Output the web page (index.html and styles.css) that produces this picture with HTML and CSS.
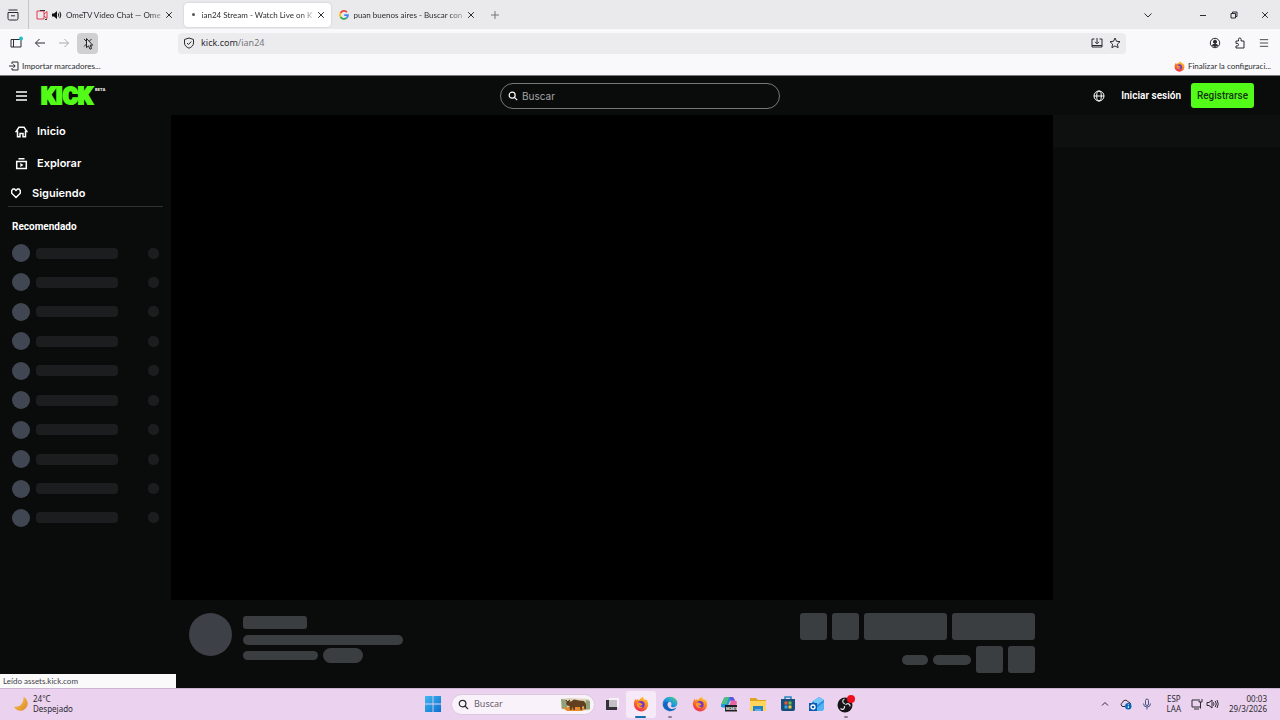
FILE: index.html
```html
<!DOCTYPE html>
<html lang="es">
<head>
<meta charset="utf-8">
<title>ian24 Stream - Watch Live on Kick</title>
<link rel="stylesheet" href="styles.css">
</head>
<body>
<svg class="defs" aria-hidden="true">
  <defs>
    <linearGradient id="ff" x1="0.8" y1="0" x2="0.3" y2="1"><stop offset="0" stop-color="#ffd43a"/><stop offset="0.45" stop-color="#ff8a1f"/><stop offset="1" stop-color="#ee2355"/></linearGradient>
    <linearGradient id="win" x1="0" y1="0" x2="1" y2="1"><stop offset="0" stop-color="#42b9ee"/><stop offset="1" stop-color="#0a6fd0"/></linearGradient>
    <linearGradient id="moon" x1="0" y1="0" x2="1" y2="1"><stop offset="0" stop-color="#f6c75c"/><stop offset="1" stop-color="#dd8a1e"/></linearGradient>
    <linearGradient id="edge" x1="0" y1="1" x2="1" y2="0"><stop offset="0" stop-color="#0b58ae"/><stop offset="0.5" stop-color="#1d9ce0"/><stop offset="1" stop-color="#5ad66b"/></linearGradient>
    <symbol id="firefox" viewBox="0 0 16 16"><path d="M8 15.500A7.200 7.200 0 0 1 .9 8.300C.8 6 1.800 4 2.800 2.600l.4 1.800L5 3l.8 1.500C7.200 2.400 8.500 1.200 10 .4c0 1.600 1 2.300 2.200 3.500l.8-.6c1.300 1.400 2.200 3.100 2.200 5A7.200 7.200 0 0 1 8 15.500z" fill="url(#ff)"/><circle cx="8" cy="8.600" r="3.700" fill="#7438c5"/><path d="M4.200 7c1.800-1 3.200-.4 4 .6 1.100.1 1.400.9.900 1.500-1 .9-2.100.7-3 .5.800 1.400 2.700 1.800 4 1.100-1.500 2-4.900 1.800-6-.8-.3-1-.3-2 .1-2.900z" fill="#ff9a26"/></symbol>
    <symbol id="x" viewBox="0 0 8 8"><path d="M1.200 1.200l5.600 5.600M6.800 1.200L1.200 6.800" fill="none" stroke="currentColor"/></symbol>
    <symbol id="lens" viewBox="0 0 12 12"><circle cx="5" cy="5" r="3.600" fill="none" stroke="currentColor" stroke-width="1.400"/><path d="M7.700 7.700L11 11" stroke="currentColor" stroke-width="1.400"/></symbol>
    <symbol id="menu" viewBox="0 0 12 12"><path d="M1 2h10M1 6h10M1 10h10" stroke="currentColor" fill="none"/></symbol>
  </defs>
</svg>

<header class="browser">
  <div class="tabs">
    <button class="tab-list" aria-label="Pestañas recientes"><svg width="12" height="12" viewBox="0 0 12 12"><path d="M1.500 1h9M1 3.500h10v6a1.500 1.500 0 0 1-1.500 1.500h-7A1.500 1.500 0 0 1 1 9.500zM4 6.800h4"/></svg></button>
    <div class="tab audible">
      <svg width="12" height="12" viewBox="0 0 12 12"><path d="M1 2h7v8H1zM8 5l3-2.500v7L8 7" stroke="#df3b50"/><path d="M4 1.500h5M9 10.500h2" stroke="#333"/></svg>
      <svg width="10" height="10" viewBox="0 0 10 10"><path d="M0 3.500h2L5 1v8L2 6.500H0z" fill="#111"/><path d="M6.300 3.300q1 1.700 0 3.400M7.800 1.800q2 3.200 0 6.400" stroke="#111"/></svg>
      <span class="tab-title">OmeTV Video Chat — Ome</span>
      <button class="close" aria-label="Cerrar pestaña"><svg width="8" height="8"><use href="#x"/></svg></button>
    </div>
    <div class="tab active">
      <span class="loading"></span>
      <span class="tab-title">ian24 Stream - Watch Live on K</span>
      <button class="close" aria-label="Cerrar pestaña"><svg width="8" height="8"><use href="#x"/></svg></button>
    </div>
    <div class="tab">
      <svg width="10" height="10" viewBox="0 0 10 10"><g stroke-width="1.700"><path d="M8 2.200A3.900 3.900 0 0 0 1.600 3" stroke="#ea4335"/><path d="M1.600 3a4 4 0 0 0 0 4" stroke="#fbbc05"/><path d="M1.600 7A3.900 3.900 0 0 0 7.500 8" stroke="#34a853"/><path d="M7.500 8A4 4 0 0 0 9 5.100H5.200" stroke="#4285f4"/></g></svg>
      <span class="tab-title">puan buenos aires - Buscar con</span>
      <button class="close" aria-label="Cerrar pestaña"><svg width="8" height="8"><use href="#x"/></svg></button>
    </div>
    <button class="new-tab" aria-label="Nueva pestaña"><svg width="10" height="10" viewBox="0 0 10 10"><path d="M5 1v8M1 5h8"/></svg></button>
    <div class="window-controls">
      <button class="all-tabs" aria-label="Lista de pestañas"><svg width="10" height="10" viewBox="0 0 10 10"><path d="M1.500 3.500L5 7l3.500-3.500"/></svg></button>
      <button aria-label="Minimizar"><svg width="8" height="8" viewBox="0 0 8 8"><path d="M1 4.500h6"/></svg></button>
      <button aria-label="Restaurar"><svg width="8" height="8" viewBox="0 0 8 8"><path d="M1 2.500h4.500V7H1zM2.500 2.500V1H7v4.500H5.500"/></svg></button>
      <button aria-label="Cerrar"><svg width="8" height="8"><use href="#x"/></svg></button>
    </div>
  </div>

  <div class="toolbar">
    <nav class="nav-buttons" aria-label="Navegación">
      <button aria-label="Barra lateral"><svg width="14" height="14" viewBox="0 0 14 14"><path d="M2 3.500h10v7.500H2zM4.500 3.500V11"/><circle cx="12" cy="2.500" r="2" fill="#20bfc9"/></svg></button>
      <button aria-label="Atrás"><svg width="12" height="12" viewBox="0 0 12 12"><path d="M11 6H1.500M5.500 2l-4 4 4 4"/></svg></button>
      <button class="dim" aria-label="Adelante"><svg width="12" height="12" viewBox="0 0 12 12"><path d="M1 6h9.500M6.500 2l4 4-4 4"/></svg></button>
      <button class="stop" aria-label="Detener"><svg width="16" height="16" viewBox="0 0 16 16"><path d="M4 4l7.500 7.500M11.500 4L4 11.500"/><path d="M6.500 3.500v9.200l2-1.900 1.500 3.400 1.600-.7-1.500-3.300h2.600z" fill="#ddd" stroke="#222"/></svg></button>
    </nav>
    <form class="url-bar">
      <svg width="12" height="12" viewBox="0 0 12 12"><path d="M6 1l4.500 1.500V6c0 2.500-2 4.200-4.500 5.200C3.500 10.200 1.500 8.500 1.500 6V2.500zM4 6l1.500 1.500L8.300 4.500"/></svg>
      <span class="url">kick.com<span>/ian24</span></span>
      <button type="button" aria-label="Instalar"><svg width="12" height="12" viewBox="0 0 12 12"><path d="M3.500 2H1v8h10V2H8.500M1 8.500h10M6 1v5.500M4 4.800l2 2 2-2"/></svg></button>
      <button type="button" aria-label="Añadir a marcadores"><svg width="12" height="12" viewBox="0 0 12 12"><path d="M6 1l1.500 3.300 3.500.4-2.600 2.400.7 3.600L6 8.900l-3.100 1.800.7-3.600L1 4.700l3.500-.4z"/></svg></button>
    </form>
    <div class="tools">
      <button aria-label="Cuenta"><svg width="12" height="12" viewBox="0 0 12 12"><circle cx="6" cy="6" r="4.700"/><circle cx="6" cy="4.800" r="1.600" fill="currentColor"/><path d="M3 8.800Q3 6.800 6 6.800T9 8.800L6 10z" fill="currentColor" stroke="none"/></svg></button>
      <button aria-label="Extensiones"><svg width="12" height="12" viewBox="0 0 12 12"><path d="M2 4h2.500V2.300a1.300 1.300 0 0 1 2.600 0V4H10v7H2V9h1.200a1.300 1.300 0 0 0 0-2.600H2z"/></svg></button>
      <button aria-label="Menú"><svg width="10" height="10"><use href="#menu"/></svg></button>
    </div>
  </div>

  <div class="bookmarks">
    <button><svg width="10" height="10" viewBox="0 0 10 10"><path d="M3 3V1h6v8H3V7M0 5h6M4.300 3.200L6.200 5 4.300 6.800"/></svg>Importar marcadores...</button>
    <button><svg width="11" height="11"><use href="#firefox"/></svg>Finalizar la configuraci...</button>
  </div>
</header>

<div class="site">
  <header class="site-header">
    <div class="brand">
      <button aria-label="Menú"><svg width="13" height="12" viewBox="0 0 13 12"><path d="M1 2h11M1 6h11M1 10h11" stroke-width="1.600"/></svg></button>
      <a href="#" aria-label="Kick Beta"><svg class="logo" width="70" height="32" viewBox="0 0 70 32"><text class="logo-name" x="2" y="24">KICK</text><text class="logo-beta" x="56" y="11">BETA</text></svg></a>
    </div>
    <label class="search"><svg width="10" height="10"><use href="#lens"/></svg><input type="search" placeholder="Buscar" aria-label="Buscar"></label>
    <div class="account">
      <button class="globe" aria-label="Idioma"><svg width="12" height="12" viewBox="0 0 12 12"><circle cx="6" cy="6" r="5"/><ellipse cx="6" cy="6" rx="2.300" ry="5"/><path d="M1 6h10"/></svg></button>
      <button class="login">Iniciar sesión</button>
      <button class="signup">Registrarse</button>
    </div>
  </header>

  <aside class="sidebar">
    <nav class="links">
      <a href="#"><svg width="13" height="13" viewBox="0 0 13 13"><path d="M1.200 6.500L4 2.200h5l2.800 4.300H10.500v5.300h-2.500V8.500H5v3.300H2.500V6.500z" stroke-width="1.500"/></svg>Inicio</a>
      <a href="#"><svg width="13" height="13" viewBox="0 0 13 13"><path d="M1.700 4.500h9.600v7H1.700zM3.500 1.700h6" stroke-width="1.500"/><path d="M5.300 6l3.200 2-3.200 2z" fill="currentColor" stroke="none"/></svg>Explorar</a>
      <a class="following" href="#"><svg width="12" height="12" viewBox="0 0 12 12"><path d="M6 10.500L1.700 6.300V3.500L3 2h1.500L6 3.500 7.500 2H9l1.300 1.500v2.800z" stroke-width="1.400"/></svg>Siguiendo</a>
    </nav>
    <h2>Recomendado</h2>
    <ul class="channels">
      <li><i></i><b></b><s></s></li><li><i></i><b></b><s></s></li><li><i></i><b></b><s></s></li><li><i></i><b></b><s></s></li><li><i></i><b></b><s></s></li>
      <li><i></i><b></b><s></s></li><li><i></i><b></b><s></s></li><li><i></i><b></b><s></s></li><li><i></i><b></b><s></s></li><li><i></i><b></b><s></s></li>
    </ul>
  </aside>

  <main class="stream">
    <div class="video"></div>
    <div class="details">
      <div class="bone avatar"></div>
      <div class="info">
        <div class="bone name"></div>
        <div class="bone title"></div>
        <div class="meta"><div class="bone category"></div><div class="bone tag"></div></div>
      </div>
      <div class="actions">
        <div class="row"><div class="bone square"></div><div class="bone square"></div><div class="bone wide"></div><div class="bone wide"></div></div>
        <div class="row"><div class="bone viewers"></div><div class="bone uptime"></div><div class="bone square"></div><div class="bone square"></div></div>
      </div>
    </div>
  </main>

  <aside class="chat"><div class="chat-header"></div></aside>
  <div class="status">Leído assets.kick.com</div>
</div>

<footer class="taskbar">
  <div class="weather">
    <svg width="16" height="16" viewBox="0 0 16 16"><path d="M10.500.8A7.300 7.300 0 1 1 .8 10.500C6 12 11 8 10.500.8z" fill="url(#moon)"/></svg>
    <div>24°C<br>Despejado</div>
  </div>
  <div class="dock">
    <button class="start" aria-label="Inicio"><svg width="16" height="16" viewBox="0 0 16 16"><path d="M0 0h7.600v7.600H0zM8.400 0H16v7.600H8.400zM0 8.400h7.600V16H0zM8.400 8.400H16V16H8.400z" fill="url(#win)"/></svg></button>
    <label class="task-search"><svg width="11" height="11"><use href="#lens"/></svg><input type="search" placeholder="Buscar" aria-label="Buscar en Windows">
      <svg width="32" height="16" viewBox="0 0 32 16"><path d="M1 3l8-1 20 1 1 11-13 1L1 13z" fill="#dfd6bd"/><path d="M1 3l6 1v8l-5 1zM26 4l4 1v8l-6 1z" fill="#8fa27a"/><path d="M3 12l10-2 14 2-5 3H7z" fill="#e58b2e"/><path d="M6 7l2-2 3 .5 3-2 5 1 5 .5 2 3v5h-1.500l-1-3-1.500 1v3h-1.500l-.5-3h-5v3h-1.500l-1-3-1 3H10l-.5-4L7 9.500z" fill="#62401f"/><path d="M6 4l1.500 2L10 4" stroke="#3a2617"/></svg>
    </label>
    <div class="apps">
      <button aria-label="Vista de tareas"><svg width="16" height="16" viewBox="0 0 16 16"><path d="M5 2h10v9H5z" fill="#f5f3f6"/><path d="M2 4h3v7h8v3H2z" fill="#343238"/><path d="M5 4h8v7H5z" fill="#c3bfc4"/></svg></button>
      <button class="current" aria-label="Firefox"><svg width="16" height="16"><use href="#firefox"/></svg></button>
      <button class="running" aria-label="Edge"><svg width="16" height="16" viewBox="0 0 16 16"><path d="M.7 8.500C.5 4 4 .7 8 .7c4.500 0 7.500 3 7.400 6.500 0 2.600-2 4-4.200 4-1.600 0-2.500-.7-2.100-1.500.8-1 .7-3.700-1.800-4C4 5.300 1.500 7 .7 8.500z" fill="url(#edge)"/><path d="M.7 8.500C2 5.500 5.500 5 7.300 5.700 5 7 5 9.300 6.500 11.200c2 2.300 5.300 2.200 8 .4A7.500 7.500 0 0 1 .7 8.500z" fill="#1267bd"/></svg></button>
      <button aria-label="Firefox"><svg width="16" height="16"><use href="#firefox"/></svg></button>
      <button aria-label="Microsoft 365"><svg width="18" height="16" viewBox="0 0 18 16"><path d="M6 1h4q1.500 0 1 1.500L8 10q-.5 1.500-2 1.500H3Q.5 11.500 1 9l2.500-6Q4.200 1 6 1z" fill="#1d9bdc"/><path d="M3.500 3Q4.200 1 6 1h3L6.500 8H1.500z" fill="#4fc07e"/><path d="M9.500 1H12q1.800 0 2.400 2L15 5h-4.500z" fill="#5f55dd"/><path d="M11 4.500h3.500q3 0 2.300 2.800L16 10H9z" fill="#e765a4"/><path d="M5 9h12v6.500H5z" fill="#221f23"/><text class="m365" x="6" y="14">M365</text></svg></button>
      <button aria-label="Explorador"><svg width="18" height="16" viewBox="0 0 18 16"><path d="M1 2h6l2 2h8v11H1z" fill="#dfa322"/><path d="M1 5h16v10H1z" fill="#ffd45b"/><path d="M4 10h10v5H4z" fill="#2582c8"/><path d="M6 13h6v2H6z" fill="#60aee2"/></svg></button>
      <button aria-label="Tienda"><svg width="16" height="16" viewBox="0 0 16 16"><path d="M5 4V1h6v3" stroke="#2787bd" stroke-width="1.500"/><path d="M1 3h14v10q0 2-2 2H3q-2 0-2-2z" fill="#174e79"/><path d="M4.500 5.500h3v3h-3z" fill="#f05a35"/><path d="M8.500 5.500h3v3h-3z" fill="#78b942"/><path d="M4.500 9.500h3v3h-3z" fill="#33a7e3"/><path d="M8.500 9.500h3v3h-3z" fill="#f8c73c"/></svg></button>
      <button aria-label="Outlook"><svg width="16" height="16" viewBox="0 0 16 16"><path d="M3 6l7-5 5 3v9l-2 2H4z" fill="#2b8ce2"/><path d="M4 5l6-4 5 3-7 5z" fill="#77c7f8"/><path d="M5 14l10-8v7l-2 2H6z" fill="#51b3f1"/><path d="M0 7h8v8H0z" fill="#0c59af"/><circle cx="4" cy="11" r="2" stroke="#fff" stroke-width="1.300" fill="none"/></svg></button>
      <button class="running" aria-label="OBS"><svg width="20" height="18" viewBox="0 0 20 18"><circle cx="9" cy="10" r="7.500" fill="#171519"/><path d="M9 9C6 8 6 5 8.500 4M9.500 10c2-2.500 5-1 4.500 1.500M8.500 11c.5 3-2 4.500-4 2.500" stroke="#ddd" stroke-width="1.200"/><circle cx="15" cy="4" r="4" fill="#ee101e"/></svg></button>
    </div>
  </div>
  <div class="tray">
    <button aria-label="Iconos ocultos"><svg width="10" height="10" viewBox="0 0 10 10"><path d="M2 6.500l3-3 3 3"/></svg></button>
    <button aria-label="OneDrive"><svg width="12" height="12" viewBox="0 0 12 12"><path d="M5 8.500H3A2 2 0 0 1 2.500 4.600a3 3 0 0 1 5.700-.6A2.300 2.300 0 0 1 10.500 6"/><circle cx="8.300" cy="8.300" r="3.200" fill="#0864b5" stroke="none"/><path d="M8.300 7.800v2.200M8.300 6.300v.8" stroke="#fff"/></svg></button>
    <button aria-label="Micrófono"><svg width="10" height="12" viewBox="0 0 10 12"><path d="M3.500 2.500a1.500 1.500 0 0 1 3 0v3.500a1.500 1.500 0 0 1-3 0zM1.500 5.500q0 3.500 3.500 3.500t3.500-3.500M5 9v2.500" stroke="#4b5482"/></svg></button>
    <div class="lang">ESP<br>LAA</div>
    <button class="network" aria-label="Red y sonido"><svg width="28" height="12" viewBox="0 0 28 12"><path d="M7 2H1v7h8M3 11h5M8 1v3h3V1M9.500 4v6.500M16 4.500h2L21 2v8l-3-2.500h-2zM22.500 4.300q1 1.700 0 3.400M24.300 3q2 3 0 6M26 2q2.500 4 0 8"/></svg></button>
    <div class="clock"><time>00:03</time><br>29/3/2026</div>
  </div>
</footer>
</body>
</html>
```
FILE: styles.css
```css
* { box-sizing: border-box; }

body {
  margin: 0;
  min-height: 100vh;
  display: flex;
  flex-direction: column;
  background: #0a0b0b;
  color: #2b2b30;
  font: 8px/12px Lato, "Open Sans", sans-serif;
}

button, input { font: inherit; color: inherit; }
button {
  display: flex;
  align-items: center;
  justify-content: center;
  padding: 0;
  border: 0;
  background: none;
  white-space: nowrap;
}
a { color: inherit; text-decoration: none; }
svg { flex: none; display: block; fill: none; stroke: currentColor; }
svg [fill^="url"], svg text { stroke: none; }
svg [fill^="#"]:not([stroke]) { stroke: none; }
.defs { position: absolute; width: 0; height: 0; }

/* Browser chrome */
.browser { background: #f9f9fb; border-bottom: 1px solid #777a7a; }
.tabs { display: flex; align-items: center; height: 29px; background: #eaeaec; }
.tab-list { width: 29px; align-self: stretch; padding-right: 2px; border-right: 1px solid #c5c5c8; }
.tab {
  display: flex;
  align-items: center;
  gap: 4px;
  min-width: 147px;
  height: 24px;
  margin-left: 2px;
  padding: 0 6px;
  border-radius: 4px;
}
.tab.audible { margin-left: 3px; padding: 0 8px 0 4px; }
.tab.active { background: #fff; box-shadow: 0 0 2px #bbb; }
.tab-title {
  flex: 1;
  white-space: nowrap;
  mask-image: linear-gradient(to right, #000 88%, #0005);
}
.close { width: 9px; height: 12px; }
.loading { width: 3px; height: 3px; margin: 0 3px 0 2px; border-radius: 50%; background: #555; }
.new-tab { width: 20px; margin-left: 4px; color: #777; }
.window-controls { display: flex; margin-left: auto; }
.window-controls button { width: 31px; height: 20px; }
.window-controls .all-tabs { margin-right: 24px; }

.toolbar { display: flex; align-items: center; height: 28px; }
.nav-buttons { display: flex; gap: 3px; margin-left: 5px; }
.nav-buttons button { width: 21px; height: 21px; border-radius: 4px; }
.nav-buttons .dim { color: #aaa; }
.nav-buttons .stop { background: #d0d0d3; }
.url-bar {
  display: flex;
  flex: 1;
  align-items: center;
  gap: 6px;
  height: 21px;
  margin: 0 83px 0 80px;
  padding: 0 5px;
  border-radius: 4px;
  background: #ececee;
  font-family: "Noto Sans", sans-serif;
  font-size: 9px;
}
.url { flex: 1; }
.url span { color: #77777c; }
.tools { display: flex; gap: 13px; margin-right: 11px; }
.bookmarks { display: flex; justify-content: space-between; height: 18px; padding: 0 9px; }
.bookmarks button { gap: 3px; }

/* Site */
.site {
  position: relative;
  flex: 1;
  display: grid;
  grid-template: 39px 1fr / 171px 1fr 227px;
  color: #fff;
  font-family: Inter, Roboto, sans-serif;
}
.site-header {
  grid-column: 1 / -1;
  display: grid;
  grid-template-columns: 1fr 280px 1fr;
  align-items: center;
}
.brand { display: flex; align-items: center; gap: 11px; padding-left: 15px; }
.logo-name { fill: #53fc18; font: 900 23px Roboto, sans-serif; }
svg .logo-name { stroke: #53fc18; stroke-width: 2px; }
.logo-beta { fill: #fff; font: 700 4px Inter, sans-serif; }
.search {
  display: flex;
  align-items: center;
  gap: 4px;
  height: 26px;
  padding: 0 7px;
  border: 1px solid #777979;
  border-radius: 13px;
}
.search input, .task-search input {
  flex: 1;
  min-width: 0;
  padding: 0;
  border: 0;
  outline: 0;
  background: none;
}
.search input { font-size: 10px; }
.search input::placeholder { color: #a3a5a5; opacity: 1; }
.account {
  display: flex;
  align-items: center;
  justify-content: flex-end;
  padding-right: 26px;
  font: 600 10px/16px Roboto, sans-serif;
}
.login { margin: 0 10px 0 16px; }
.signup { width: 63px; height: 25px; border-radius: 3px; background: #53fc18; color: #10380a; font-weight: 500; }

.sidebar { padding: 0 8px; }
.links { border-bottom: 1px solid #303333; font-size: 11px; line-height: 16px; font-weight: 600; }
.links a { display: flex; align-items: center; gap: 9px; height: 32px; padding-left: 7px; }
.links .following { height: 27px; gap: 10px; padding-left: 2px; }
.sidebar h2 { margin: 12px 4px 9px; font: 700 10px/16px Roboto, sans-serif; }
.channels {
  display: flex;
  flex-direction: column;
  justify-content: space-between;
  height: 283px;
  margin: 0;
  padding: 0 4px;
  list-style: none;
}
.channels li { display: flex; align-items: center; gap: 6px; }
.channels i { width: 18px; height: 18px; border-radius: 50%; background: #414752; }
.channels b { width: 82px; height: 11px; border-radius: 4px; background: #1c1d1f; }
.channels s { width: 11px; height: 11px; margin-left: auto; border-radius: 5px; background: #1c1d1f; }

.stream { display: flex; flex-direction: column; }
.video { flex: 1; background: #000; }
.details { display: flex; gap: 11px; padding: 13px 18px 15px; }
.bone { height: 10px; border-radius: 5px; background: #3b3e41; }
.avatar { width: 43px; height: 43px; border-radius: 50%; background: #3d4046; }
.info { display: flex; flex-direction: column; gap: 6px; padding-top: 3px; }
.name { width: 64px; height: 13px; border-radius: 3px; }
.title { width: 160px; height: 10px; }
.meta { display: flex; align-items: center; gap: 5px; height: 9px; }
.category { width: 75px; height: 9px; }
.tag { width: 40px; height: 15px; border-radius: 8px; }
.actions { display: flex; flex-direction: column; gap: 6px; margin-left: auto; }
.row { display: flex; align-items: center; justify-content: flex-end; gap: 5px; }
.square { width: 27px; height: 27px; border-radius: 3px; }
.wide { width: 83px; height: 27px; border-radius: 3px; }
.viewers { width: 26px; }
.uptime { width: 38px; }
.chat-header { height: 32px; background: #0e0f0f; border-bottom: 1px solid #111212; }
.status {
  position: absolute;
  left: 0;
  bottom: 0;
  min-width: 176px;
  padding: 1px 3px;
  background: #fafafa;
  color: #44444a;
  font: 8px/12px Lato, sans-serif;
}

/* Taskbar */
.taskbar {
  display: grid;
  grid-template-columns: 1fr auto 1fr;
  align-items: center;
  height: 32px;
  padding-bottom: 1px;
  border-top: 1px solid #cbb5d0;
  background: #ebd2ef;
  font-family: "Noto Sans", sans-serif;
  line-height: 10px;
}
.weather { display: flex; align-items: center; gap: 4px; padding-left: 13px; }
.dock { display: flex; align-items: center; }
.start { width: 28px; height: 28px; }
.task-search {
  display: flex;
  align-items: center;
  gap: 5px;
  width: 144px;
  height: 21px;
  margin: 0 2px 0 4px;
  padding: 0 2px 0 6px;
  border: 1px solid #dbc8df;
  border-radius: 11px;
  background: #faf2fb;
  font-size: 9px;
}
.task-search input::placeholder { color: #66606a; opacity: 1; }
.apps { display: grid; grid-template-columns: repeat(9, 1fr); width: 264px; }
.apps button { position: relative; height: 27px; border-radius: 3px; }
.apps .current { background: #f6eaf8; }
.apps .current::after, .apps .running::after {
  content: "";
  position: absolute;
  bottom: 0;
  width: 4px;
  height: 2px;
  border-radius: 1px;
  background: #89808d;
}
.apps .current::after { width: 11px; background: #176fae; }
svg .m365 { fill: #fff; font: 700 4px Inter, sans-serif; }
.tray { display: flex; align-items: center; justify-content: flex-end; gap: 10px; padding-right: 13px; }
.lang { margin-left: 5px; text-align: center; }
.clock { text-align: right; }
```
